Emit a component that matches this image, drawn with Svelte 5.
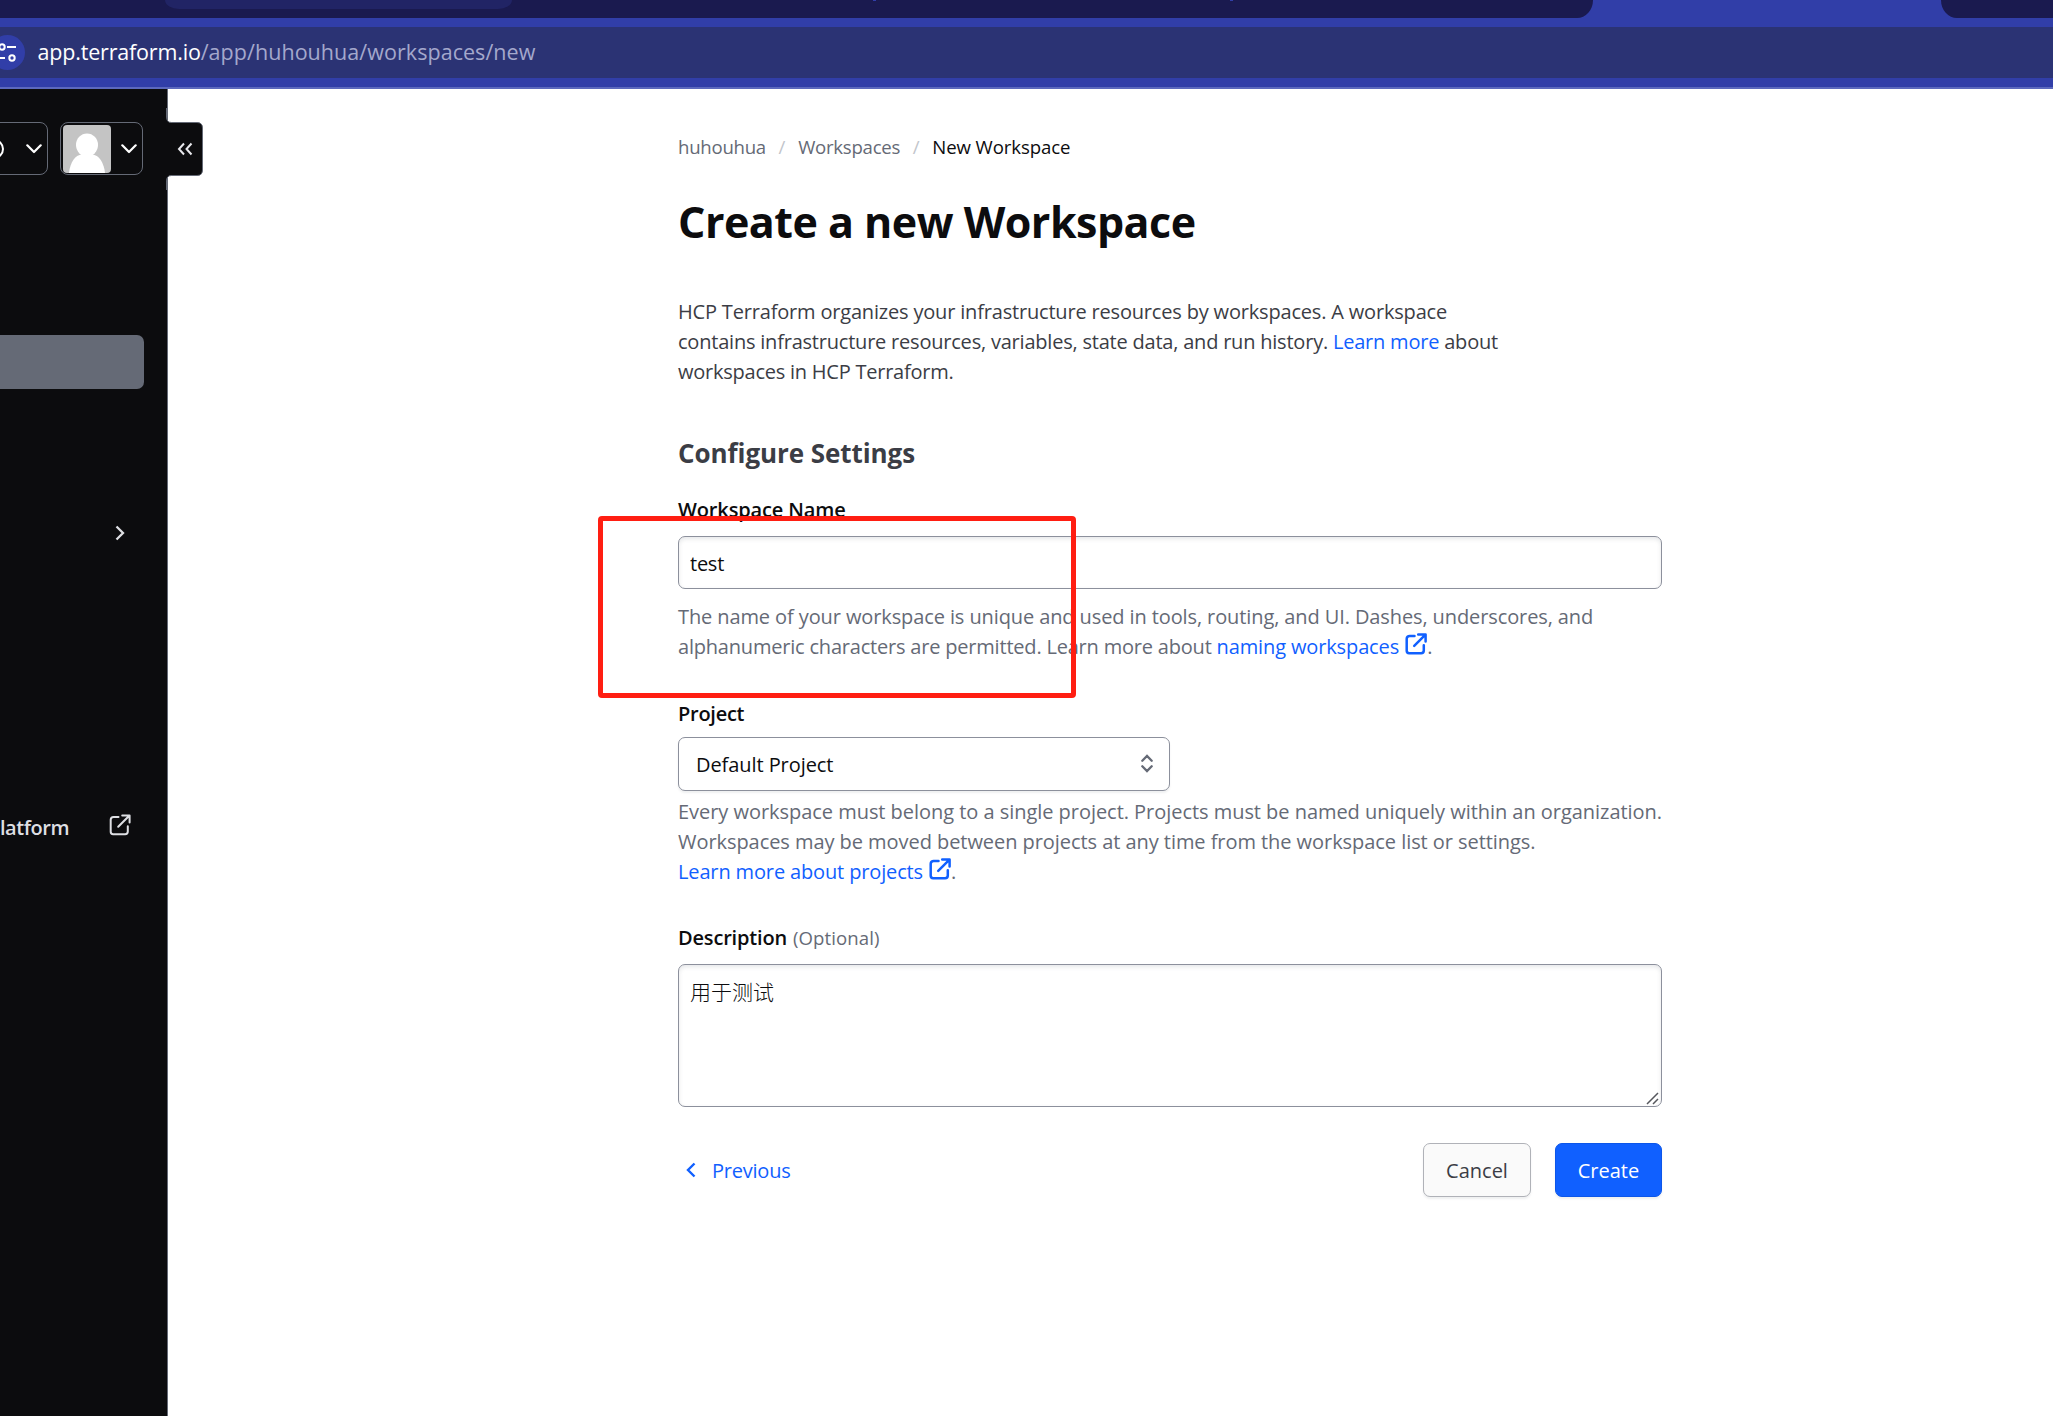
<script>
  let name = $state('test');
  let description = $state('用于测试');
</script>

{#snippet external()}
  <svg class="ext" viewBox="0 0 22 22" aria-hidden="true">
    <path d="M9.5 2.9H4.6a2.9 2.9 0 0 0-2.9 2.9v12a2.4 2.4 0 0 0 2.4 2.4h12a2.7 2.7 0 0 0 2.7-2.7v-5.3" />
    <path d="M13.2 1.4H20.6V8.6M20.2 1.8L9.2 12.8" />
  </svg>
{/snippet}

{#snippet chevronDown()}
  <svg class="chev" viewBox="0 0 16 10" aria-hidden="true"><path d="M1.3 1.3L8 8l6.7-6.7" /></svg>
{/snippet}

<div class="window">
  <header class="chrome">
    <div class="tabs">
      <div class="strip left">
        <div class="tab"></div>
        <div class="divider first"></div>
        <div class="divider"></div>
      </div>
      <div class="strip right"></div>
    </div>
    <div class="address">
      <span class="site">
        <svg viewBox="0 0 22 22" aria-hidden="true">
          <circle cx="7" cy="5" r="2.7" /><path d="M12 5h9M1 16h9" /><circle cx="17" cy="16" r="2.7" />
        </svg>
      </span>
      <span class="host">app.terraform.io</span><span class="path">/app/huhouhua/workspaces/new</span>
    </div>
  </header>

  <div class="page">
    <nav class="sidebar">
      <div class="controls">
        <button class="ctl help" aria-label="Help">
          <svg class="ring" viewBox="0 0 20 20" aria-hidden="true"><circle cx="10" cy="10" r="9" /></svg>
          {@render chevronDown()}
        </button>
        <button class="ctl user" aria-label="User menu">
          <svg class="avatar" viewBox="0 0 48 48" aria-hidden="true">
            <rect width="48" height="48" rx="4" fill="#c4c4c4" />
            <ellipse cx="24" cy="20" rx="11" ry="11.5" fill="#fff" />
            <path d="M6 48C7 38 12 29.5 19 29.5h10C36 29.5 41 38 42 48z" fill="#fff" />
          </svg>
          {@render chevronDown()}
        </button>
      </div>
      <div class="active"></div>
      <div class="item more">
        <svg viewBox="0 0 10 16" aria-hidden="true"><path d="M1.5 1.5L8 8l-6.500 6.500" /></svg>
      </div>
      <div class="item platform"><span>latform</span>{@render external()}</div>
      <svg class="collapse" viewBox="0 0 38 82" aria-label="Collapse">
        <path class="edge" d="M0.500 0V9Q0.500 14.500 5.500 14.500H31Q36.500 14.500 36.500 20V62Q36.500 67.500 31 67.500H5.500Q0.500 67.500 0.500 73V82" />
        <path class="arrows" d="M18 35.500L13 41l5 5.500M25.500 35.500L20.500 41l5 5.500" />
      </svg>
    </nav>

    <main>
      <div class="crumbs">
        <span class="muted c1">huhouhua</span><i>/</i><span class="muted c2">Workspaces</span><i>/</i><span class="c3">New Workspace</span>
      </div>
      <h1>Create a new Workspace</h1>
      <p class="intro">
        <span class="line t17">HCP Terraform organizes your infrastructure resources by workspaces. A workspace</span>
        <span class="line t21">contains infrastructure resources, variables, state data, and run history. <a href="#top">Learn more</a> about</span>
        <span class="line t23">workspaces in HCP Terraform.</span>
      </p>

      <h2>Configure Settings</h2>

      <section class="field name">
        <label for="ws">Workspace Name</label>
        <input id="ws" bind:value={name} />
        <p class="help-text">
          <span class="line t10">The name of your workspace is unique and used in tools, routing, and UI. Dashes, underscores, and</span>
          <span class="line t20">alphanumeric characters are permitted. Learn more about <a class="t13" href="#top">naming workspaces {@render external()}</a>.</span>
        </p>
        <div class="highlight"></div>
      </section>

      <section class="field project">
        <label for="pj" class="t30">Project</label>
        <button id="pj" class="select">
          <span>Default Project</span>
          <svg viewBox="0 0 12 19" aria-hidden="true"><path d="M1.300 6.800L6 2l4.700 4.800M1.300 12.200L6 17l4.700-4.800" /></svg>
        </button>
        <p class="help-text">
          <span class="line t04">Every workspace must belong to a single project. Projects must be named uniquely within an organization.</span>
          <span class="line t05">Workspaces may be moved between projects at any time from the workspace list or settings.</span>
          <span class="line t14"><a href="#top">Learn more about projects {@render external()}</a>.</span>
        </p>
      </section>

      <section class="field desc">
        <label for="ds" class="t17">Description <small>(Optional)</small></label>
        <div class="area">
          <textarea id="ds" bind:value={description}></textarea>
          <svg class="grip" viewBox="0 0 13 13" aria-hidden="true"><path d="M1 12L12 1M7 12l5-5" /></svg>
        </div>
      </section>

      <footer>
        <a class="previous" href="#top">
          <svg viewBox="0 0 10 16" aria-hidden="true"><path d="M8.500 1.500L2 8l6.500 6.500" /></svg>
          <span>Previous</span>
        </a>
        <button class="btn cancel">Cancel</button>
        <button class="btn create">Create</button>
      </footer>
    </main>
  </div>
</div>

<style>
  :global(body) { background: #fff; overflow: hidden; }
  * { box-sizing: border-box; }
  .window {
    width: 2053px; height: 1416px; overflow: hidden; display: flex; flex-direction: column;
    font: 400 20px/30px "Open Sans", "Noto Sans CJK SC", sans-serif; color: #0c0c0e;
  }
  svg { fill: none; stroke: currentColor; stroke-width: 2; flex: none; }
  button, input, textarea { font: inherit; color: inherit; margin: 0; }
  h1, h2, p { margin: 0; }
  a { color: #1060ff; text-decoration: none; }

  .chrome { height: 89px; background: #313ea8; border-bottom: 2px solid #5c69bd; flex: none; }
  .tabs { display: flex; justify-content: space-between; height: 18px; margin-bottom: 9px; }
  .strip { background: #1a1a4f; height: 18px; }
  .strip.left { width: 1593px; border-bottom-right-radius: 16px 18px; padding-left: 165px; display: flex; }
  .strip.right { width: 112px; border-bottom-left-radius: 16px 18px; }
  .tab { width: 347px; height: 9px; background: #212465; border-radius: 0 0 14px 14px / 0 0 9px 9px; }
  .divider { width: 3px; height: 1px; margin-left: 354px; background: #313ea8; }
  .divider.first { margin-left: 361px; }
  .address {
    height: 51px; background: #2b3374; display: flex; align-items: center; font-size: 21.500px;
    white-space: pre;
  }
  .site {
    width: 35px; height: 35px; margin: 0 12px 0 -10px; border-radius: 50%; background: #313ea8; color: #fff;
    display: flex; align-items: center; justify-content: center;
  }
  .site svg { width: 22px; height: 22px; margin-right: 3px; }
  .host, .path { margin-top: -2px; }
  .host { color: #fff; letter-spacing: -0.180px; margin-left: 0.5px; }
  .path { color: #a4a8cc; letter-spacing: 0.050px; }

  .page { flex: 1; display: flex; min-height: 0; }
  .sidebar {
    position: relative; width: 168px; flex: none; background: #0c0c0e; border-right: 1px solid #656a76;
    color: #fff; padding-top: 33px;
  }
  .controls { display: flex; gap: 12px; height: 53px; }
  .ctl {
    height: 53px; background: none; border: 1px solid #656a76; border-radius: 8px; padding: 0;
    display: flex; align-items: center;
  }
  .chev { width: 16px; height: 10px; stroke-width: 2.200; stroke-linecap: round; stroke-linejoin: round; }
  .help { width: 58px; margin-left: -10px; }
  .ring { width: 20px; height: 20px; margin: 0 22px 0 -7px; }
  .user { width: 83px; padding-left: 2px; gap: 10px; }
  .avatar { width: 48px; height: 48px; stroke: none; }
  .active { width: 144px; height: 54px; margin-top: 160px; background: #656a76; border-radius: 0 7px 7px 0; }
  .item { display: flex; align-items: center; color: #dedfe3; }
  .more { height: 54px; margin-top: 117px; padding-left: 115px; }
  .more svg { width: 10px; height: 16px; stroke-width: 2.300; }
  .platform {
    height: 54px; margin-top: 241px; font-weight: 600; letter-spacing: -0.460px; justify-content: space-between;
    padding-right: 36px;
  }
  .platform .ext { margin-top: -6px; }
  .collapse { position: absolute; left: 166px; top: 19px; width: 38px; height: 82px; }
  .edge { fill: #0c0c0e; stroke: #656a76; stroke-width: 1; }
  .arrows { stroke: #e8e8ec; stroke-width: 2; }

  main { width: 984px; margin-left: 510px; padding-top: 43px; }
  .crumbs { display: flex; height: 30px; font-size: 18.600px; }
  .crumbs i { font-style: normal; color: #c2c5cb; width: 32.200px; text-align: center; }
  .muted { color: #656a76; }
  .c1, .c2 { letter-spacing: -0.250px; }
  .c3 { letter-spacing: -0.100px; }
  h1 { margin-top: 30px; font-size: 43px; line-height: 60px; font-weight: 700; letter-spacing: -0.510px; }
  .intro { margin-top: 45px; color: #3b3d45; }
  .line { display: block; white-space: nowrap; height: 30px; }
  .t04 { letter-spacing: -0.040px; }
  .t05 { letter-spacing: -0.056px; }
  .t10 { letter-spacing: -0.105px; }
  .t13 { letter-spacing: -0.130px; }
  .t14 { letter-spacing: -0.140px; }
  .t17 { letter-spacing: -0.180px; }
  .t20 { letter-spacing: -0.200px; }
  .t21 { letter-spacing: -0.211px; }
  .t23 { letter-spacing: -0.236px; }
  h2 {
    margin-top: 48px; font-size: 26px; line-height: 36px; font-weight: 700; color: #3b3d45;
    letter-spacing: -0.074px;
  }

  .field { position: relative; display: flex; flex-direction: column; }
  label { font-weight: 600; letter-spacing: -0.140px; height: 30px; }
  label.t30 { letter-spacing: -0.270px; }
  label.t17 { letter-spacing: -0.174px; }
  small { font-size: 18.600px; font-weight: 400; color: #656a76; letter-spacing: 0.080px; margin-left: 1px; }
  .help-text { color: #656a76; }
  .ext { width: 22px; height: 22px; stroke-width: 2.500; stroke-linecap: round; stroke-linejoin: round; }
  .help-text .ext { vertical-align: -1px; margin-left: 1px; }
  .platform .ext { stroke-width: 2; }

  .name { margin-top: 24px; }
  .name .help-text { margin-top: 13px; }
  input, textarea {
    width: 984px; border: 1px solid #8c909c; border-radius: 7px; background: #fff; outline: none;
    box-shadow: inset 0 2px 4px rgb(101 106 118 / 16%);
  }
  input { height: 53px; margin-top: 11px; padding: 2px 11px 0; letter-spacing: -0.250px; }
  .highlight {
    position: absolute; left: -80px; top: 21px; width: 478px; height: 182px; border: 5px solid #ff1e12;
    border-radius: 4px;
  }

  .project { margin-top: 37px; }
  .select {
    width: 492px; height: 54px; margin-top: 8px; padding: 2px 16px 0 17px; background: #fff;
    border: 1px solid #8c909c; border-radius: 7px; box-shadow: 0 2px 2px rgb(101 106 118 / 10%);
    display: flex; align-items: center; justify-content: space-between; letter-spacing: -0.070px;
  }
  .select svg { width: 12px; height: 19px; color: #656a76; stroke-width: 2.300; margin-top: -3px; stroke-linecap: round; }
  .project .help-text { margin-top: 6px; }

  .desc { margin-top: 36px; }
  .area { position: relative; height: 143px; margin-top: 11px; }
  textarea { display: block; height: 143px; padding: 12px 11px; resize: none; font-size: 21px; font-weight: 300; }
  .grip { position: absolute; right: 3px; bottom: 2px; width: 13px; height: 13px; color: #55575c; stroke-width: 1.500; }

  footer { display: flex; align-items: center; margin-top: 36px; height: 54px; }
  .previous { display: flex; align-items: center; gap: 16px; margin-left: 8px; margin-right: auto; letter-spacing: -0.220px; }
  .previous span { padding-top: 2px; }
  .previous svg { width: 10px; height: 16px; stroke-width: 2.400; }
  .btn { height: 54px; padding: 2px 0 0; border-radius: 7px; box-shadow: 0 2px 2px rgb(101 106 118 / 10%); }
  .cancel { width: 108px; border: 1px solid #b0b2b8; background: #fafafa; color: #3b3d45; margin-right: 24px; }
  .create { width: 107px; border: 1px solid #0c56e9; background: #1060ff; color: #fff; }
</style>
